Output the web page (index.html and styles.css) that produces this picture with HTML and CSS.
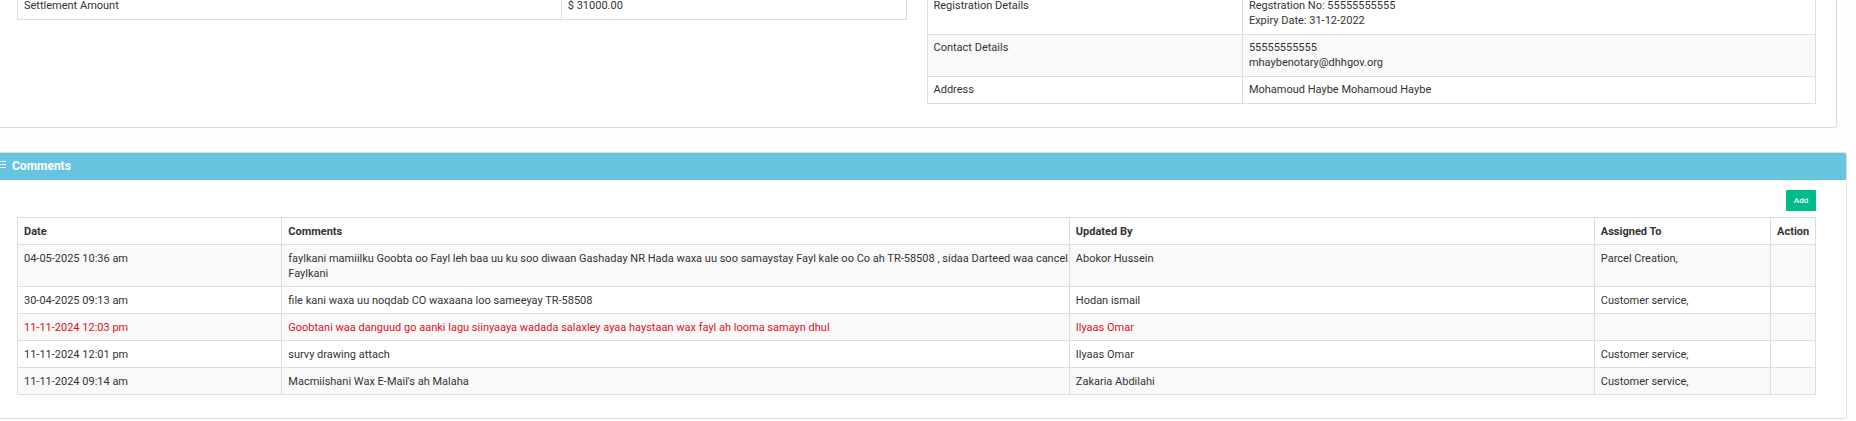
FILE: index.html
```html
<!DOCTYPE html>
<html lang="en">
<head>
    <meta charset="UTF-8">
    <meta name="viewport" content="width=device-width, initial-scale=1.0">
    <title>Comments</title>
    <link rel="stylesheet" href="styles.css">
</head>
<body>
    <div class="page">
        <section class="panel details">
            <div class="details-col">
                <table class="table amount-table">
                    <tr>
                        <td class="name">Settlement Amount</td>
                        <td>$ 31000.00</td>
                    </tr>
                </table>
            </div>
            <div class="details-col">
                <table class="table notary-table">
                    <tr>
                        <td class="name">Registration Details</td>
                        <td>Regstration No: 55555555555<br>Expiry Date: 31-12-2022</td>
                    </tr>
                    <tr class="odd">
                        <td>Contact Details</td>
                        <td>55555555555<br>mhaybenotary@dhhgov.org</td>
                    </tr>
                    <tr>
                        <td>Address</td>
                        <td>Mohamoud Haybe Mohamoud Haybe</td>
                    </tr>
                </table>
            </div>
        </section>

        <section class="panel comments">
            <div class="panel-heading">
                <svg class="list-icon" width="6" height="9" viewBox="0 0 6 9" aria-hidden="true">
                    <path d="M0 1.5h6M0 4.5h6M0 7.5h6" stroke="#fff" fill="none"/>
                    <path d="M1.5 0v9" stroke="#67c4df" stroke-opacity="0.6" fill="none"/>
                </svg>
                <h2>Comments</h2>
            </div>
            <div class="panel-body">
                <div class="toolbar">
                    <button type="button" class="btn-add">Add</button>
                </div>
                <table class="table comments-table">
                    <thead>
                        <tr>
                            <th class="date">Date</th>
                            <th class="comment">Comments</th>
                            <th class="updated">Updated By</th>
                            <th class="assigned">Assigned To</th>
                            <th class="action">Action</th>
                        </tr>
                    </thead>
                    <tbody>
                        <tr class="odd">
                            <td>04-05-2025 10:36 am</td>
                            <td class="long">faylkani mamiilku Goobta oo Fayl leh baa uu ku soo diwaan Gashaday NR Hada waxa uu soo samaystay Fayl kale oo Co ah TR-58508 , sidaa Darteed waa cancel<br>Faylkani</td>
                            <td>Abokor Hussein</td>
                            <td>Parcel Creation,</td>
                            <td></td>
                        </tr>
                        <tr>
                            <td>30-04-2025 09:13 am</td>
                            <td>file kani waxa uu noqdab CO waxaana loo sameeyay TR-58508</td>
                            <td>Hodan ismail</td>
                            <td>Customer service,</td>
                            <td></td>
                        </tr>
                        <tr class="odd rejected">
                            <td>11-11-2024 12:03 pm</td>
                            <td>Goobtani waa danguud go aanki lagu siinyaaya wadada salaxley ayaa haystaan wax fayl ah looma samayn dhul</td>
                            <td>Ilyaas Omar</td>
                            <td></td>
                            <td></td>
                        </tr>
                        <tr>
                            <td>11-11-2024 12:01 pm</td>
                            <td>survy drawing attach</td>
                            <td>Ilyaas Omar</td>
                            <td>Customer service,</td>
                            <td></td>
                        </tr>
                        <tr class="odd">
                            <td>11-11-2024 09:14 am</td>
                            <td>Macmiishani Wax E-Mail's ah Malaha</td>
                            <td>Zakaria Abdilahi</td>
                            <td>Customer service,</td>
                            <td></td>
                        </tr>
                    </tbody>
                </table>
            </div>
        </section>
    </div>
</body>
</html>
```
FILE: styles.css
```css
* {
    box-sizing: border-box;
}
body {
    margin: 0;
    background: #fefefe;
    color: #333;
    font-family: Roboto, sans-serif;
    font-size: 11px;
    line-height: 15px;
}
.page {
    overflow: hidden;
}
.panel {
    background: #fff;
    border: 1px solid #ddd;
    border-left: none;
    border-radius: 0 3px 3px 0;
}
/* first row is partly scrolled out of view */
.details {
    display: grid;
    grid-template-columns: 1fr 1fr;
    gap: 20px;
    margin: -9px 19px 24px 0;
    padding: 0 20px 23px 17px;
}
.comments {
    margin-right: 9px;
}
.table {
    width: 100%;
    border-collapse: collapse;
    table-layout: fixed;
}
.table th,
.table td {
    border: 1px solid #ddd;
    padding: 5px 4px 6px 6px;
    text-align: left;
    vertical-align: top;
}
.table .odd {
    background: #f9f9f9;
}
.table .rejected {
    color: #e0101c;
}
.amount-table .name {
    width: 61.2%;
}
.notary-table .name {
    width: 35.5%;
}
.panel-heading {
    display: flex;
    align-items: center;
    gap: 6px;
    height: 27px;
    background: #67c4df;
    color: #fff;
    border-radius: 0 2px 0 0;
}
.panel-heading h2 {
    margin: 0;
    font-size: 12px;
    font-weight: 700;
}
.list-icon {
    margin-bottom: 4px;
}
.panel-body {
    padding: 10px 30px 23px 17px;
}
.toolbar {
    display: flex;
    justify-content: flex-end;
    margin-bottom: 6px;
}
.btn-add {
    width: 30px;
    height: 21px;
    padding: 0;
    border: none;
    border-radius: 1px;
    background: #00bc8c;
    color: #fff;
    font-family: inherit;
    font-size: 8px;
    font-weight: 500;
    cursor: pointer;
}
.comments-table th,
.comments-table td {
    padding: 6px 4px 5px 6px;
}
.comments-table .long {
    white-space: nowrap;
}
.comments-table .date {
    width: 14.7%;
}
.comments-table .comment {
    width: 43.8%;
}
.comments-table .updated {
    width: 29.2%;
}
.comments-table .assigned {
    width: 9.8%;
}
.comments-table .action {
    width: 2.5%;
}
```
